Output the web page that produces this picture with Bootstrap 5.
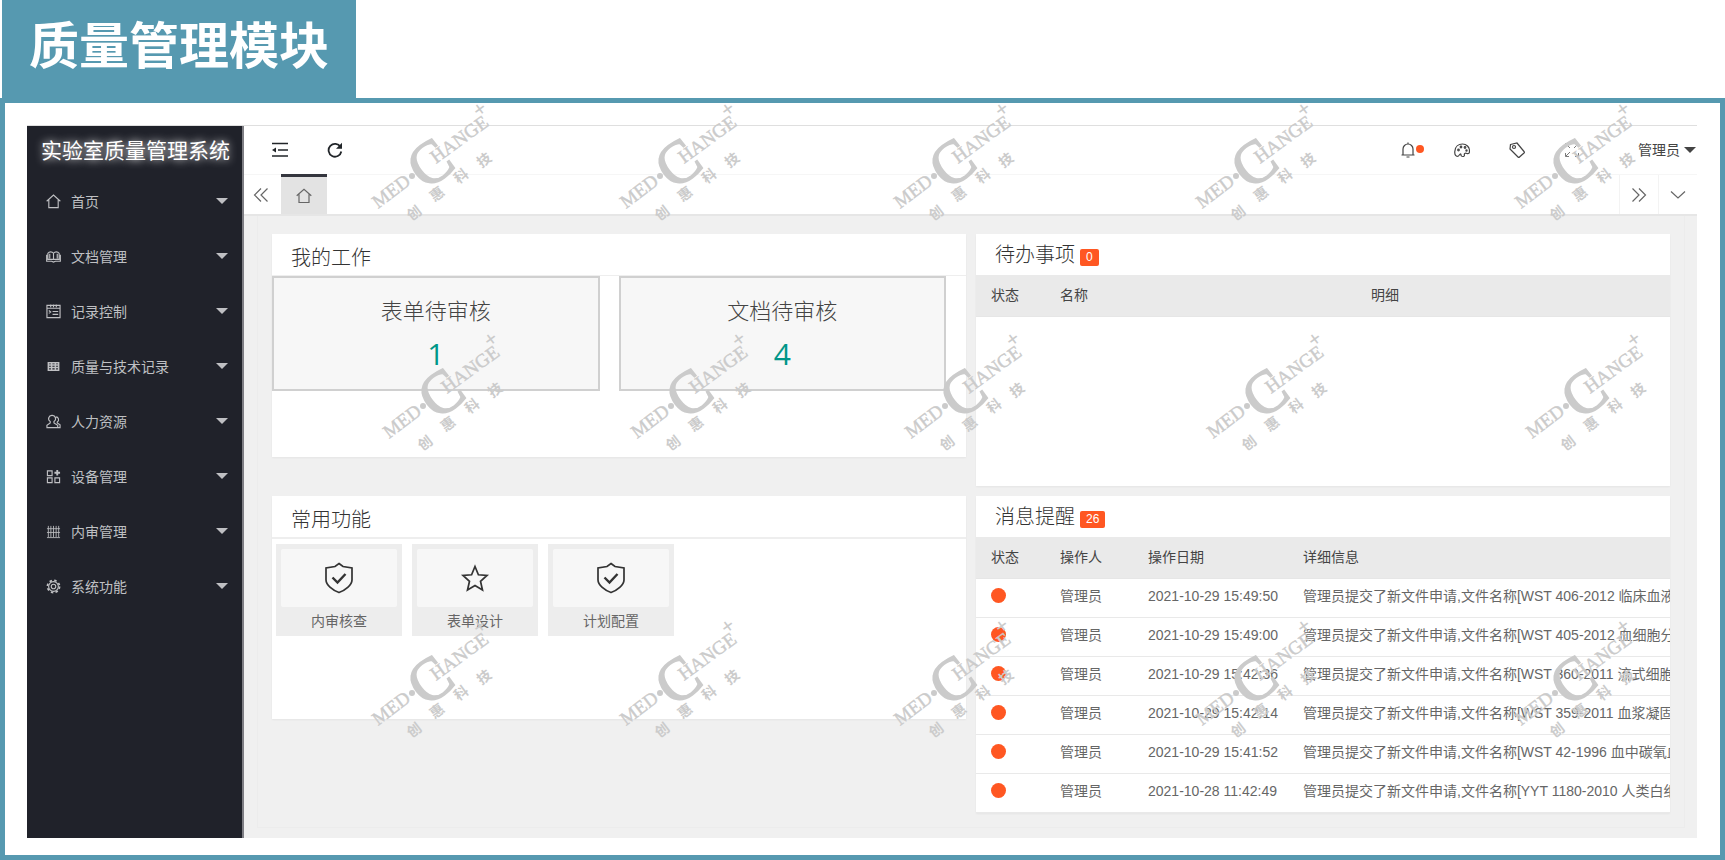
<!DOCTYPE html>
<html lang="zh-CN">
<head>
<meta charset="utf-8">
<meta name="viewport" content="width=device-width, initial-scale=1">
<title>质量管理模块</title>
<link href="https://cdn.jsdelivr.net/npm/bootstrap@5.3.0/dist/css/bootstrap.min.css" rel="stylesheet">
<style>
  :root { --teal: #5699b0; --ink: #20222a; --alert: #ff5722; }
  body { font-family: "Liberation Sans", "Noto Sans CJK SC", sans-serif; font-size: 14px; line-height: 20px; color: #666; background: #fff; }
  a { text-decoration: none; color: inherit; }
  button { color: inherit; }
  .ico { fill: none; stroke: currentColor; stroke-width: 1.2; display: block; width: 16px; height: 16px; }
  .page-title { background: var(--teal); color: #fff; height: 98px; width: 354px; margin-left: 2px; padding: 11px 0 0 27px; font-size: 50px; line-height: 72px; font-weight: 700; }
  .frame { border: 5px solid var(--teal); padding: 22px 23px 17px 22px; }
  .app { border-top: 1px solid #dfdfdf; }
  .side { width: 217px; background: var(--ink); border-right: 2px solid #7e7e84; color: #bfc0c3; }
  .brand { height: 48px; padding: 0 14px; font-size: 21px; line-height: 49px; color: #fff; text-shadow: 0 0 8px #fff; white-space: nowrap; }
  .side-link { height: 55px; padding: 0 14px 0 19px; gap: 10px; }
  .caret { border: 6px solid transparent; border-top-color: currentColor; border-bottom: 0; margin-bottom: 1px; }
  .side-link .ico { width: 15px; height: 15px; }
  .topbar { height: 49px; padding: 0 1px 0 28px; border-bottom: 1px solid #f6f6f6; color: #444; }
  .icon-btn { background: none; border: 0; padding: 0; }
  .tools { gap: 39px; }
  .alerts { gap: 30px; }
  .tool-full { margin-right: 19px; }
  .tabs { height: 41px; border-bottom: 2px solid #e6e6e6; }
  .tab-home { width: 46px; background: #e3e3e3; border-top: 3px solid #34363e; margin-top: -1px; }
  .tab-side { width: 37px; }
  .tab-ctl { width: 39px; border-left: 1px solid #f3f3f3; }
  .content { background: #f0f0f0; padding: 0 12px 10px 13px; }
  .sheet { border: 1px solid #ececec; border-top: 0; padding: 18px 14px 14px; }
  .grow-safe { min-width: 0; }
  .panels { --bs-gutter-x: 10px; --bs-gutter-y: 10px; }
  .panel { background: #fff; box-shadow: 0 1px 2px rgba(0,0,0,.05); overflow: hidden; }
  .panel-title { height: 41px; padding-left: 19px; font-size: 20px; line-height: 49px; font-weight: 300; margin: 0; color: #333; }
  .panel-title.with-count { line-height: 40px; }
  .rule { border-bottom: 1px solid #eee; height: 42px; }
  .rule-wide { border-bottom-width: 2px; height: 43px; }
  .short { height: 223px; }
  .todo { height: 252px; }
  .count { background: var(--alert); color: #fff; font-size: 12px; line-height: 17px; font-weight: 400; padding: 0 6px; border-radius: 2px; margin: 5px 0 0 5px; }
  .work { gap: 19px; padding-right: 20px; }
  .work-box { height: 115px; border: 2px solid #d0d0d0; background: #f7f7f7; padding-top: 17px; color: #444; font-size: 22px; line-height: 33px; font-weight: 300; }
  .work-num { font-family: "Open Sans", sans-serif; font-size: 30px; line-height: 36px; font-weight: 400; color: #009688; margin-top: 8px; }
  .tiles { gap: 10px; padding: 5px 4px; }
  .tile { width: 126px; height: 92px; background: #ededed; padding: 5px; }
  .tile-pic { height: 58px; background: #f7f7f7; border-radius: 2px; color: #333; }
  .tile-pic .ico { width: 32px; height: 32px; stroke-width: 1.7; }
  .tile-name { line-height: 28px; }
  .grid-table { table-layout: fixed; width: 100%; margin: 0; }
  .grid-table th { background: #eaeaea; height: 41px; padding: 0 0 0 15px; font-weight: 400; color: #444; border-bottom: 1px solid #e6e6e6; }
  .grid-table td { height: 39px; padding: 0 0 3px 15px; border-bottom: 1px solid #e9e9e9; white-space: nowrap; overflow: hidden; color: #666; }
  .c-state { width: 69px; } .c-name { width: 311px; } .c-user { width: 88px; } .c-date { width: 155px; }
  .dot { display: block; width: 15px; height: 15px; border-radius: 50%; background: var(--alert); margin-bottom: 2px; }
  .dot-sm { display: block; width: 8px; height: 8px; border-radius: 50%; background: var(--alert); margin-bottom: 3px; }
  .marks { pointer-events: none; fill: #cbcbcb; font-family: "Liberation Serif", "Noto Sans CJK SC", serif; }
</style>
</head>
<body>
<svg class="d-none">
  <symbol id="home" viewBox="0 0 16 16"><path d="M.7 7.700 8 1.200l7.300 6.500M3 6.200V14.500H13V6.200"/></symbol>
  <symbol id="book" viewBox="0 0 16 16"><path d="M8 4.500C6.500 2.500 3.500 2.500 2 4.500V11h6V4.500C9.500 2.500 12.500 2.500 14 4.500V11H8M.7 6v7H6l2 1 2-1h5.300V6M4 5v5M12 5v5"/></symbol>
  <symbol id="form" viewBox="0 0 16 16"><path d="M1 1.500h14v13H1zM1 4.500h14M5 .5v3M8 .5v3M11 .5v3M3 7l2 1.500L3 10M7 8h6M7 11h6"/></symbol>
  <symbol id="grid" viewBox="0 0 16 16"><path d="M2.500 4h11v8h-11zM2.500 6.500h11M2.500 9h11M6 4v8M10 4v8" stroke-width="1.600"/></symbol>
  <symbol id="people" viewBox="0 0 16 16"><path d="M6.500 1.500a3.500 3.500 0 0 1 2 6.500v1.500L12.500 12v2.500H1V12l3.500-2.500V8a3.500 3.500 0 0 1 2-6.500M10.500 3c3 0 4 4 1.500 5.500v1l3 2v3h-2"/></symbol>
  <symbol id="blocks" viewBox="0 0 16 16"><path d="M1.500 2h5v5h-5zM1.500 9.500h5v5h-5zM9.500 9.500h5v5h-5z"/><path d="M12 1v6M9 4h6" stroke-width="2"/></symbol>
  <symbol id="mesh" viewBox="0 0 16 16"><path d="M1 14.500h14M2.500 2v12M5.200 2v12M8 2v12M10.800 2v12M13.500 2v12M1 5h14M1 9h14" stroke-width=".9"/></symbol>
  <symbol id="gear" viewBox="0 0 16 16"><circle cx="8" cy="8" r="5.200"/><circle cx="8" cy="8" r="2.400"/><circle cx="8" cy="8" r="6.500" stroke-width="1.800" stroke-dasharray="2.600 2.505"/></symbol>
  <symbol id="fold" viewBox="0 0 16 16"><path d="M0 1.500h16M6 8h10M0 14h16" stroke-width="1.700"/><path d="M0 8l4-2.500v5z" fill="currentColor" stroke="none"/></symbol>
  <symbol id="reload" viewBox="0 0 16 16"><path d="M13.500 5A6.400 6.400 0 1 0 14.300 9.500" stroke-width="1.800"/><path d="M15 .8v6H9z" fill="currentColor" stroke="none"/></symbol>
  <symbol id="bell" viewBox="0 0 16 16"><path d="M1.500 13h13M3 13V7a5 5 0 0 1 10 0v6M6.500 15h3M8 .5V2"/></symbol>
  <symbol id="palette" viewBox="0 0 16 16"><path d="M4.500 14C2 15 .5 13 .8 9.500 1 4.500 4.500 2 8.500 2S15.500 5 15.500 9c0 2.500-1 3-2.500 2.500-2-.8-3 0-2.600 1.500C10.800 15 7 15 7 13s-1-1-2.500 1z"/><circle cx="4.500" cy="8" r=".8"/><circle cx="7" cy="5" r=".8"/><circle cx="11" cy="5.500" r=".8"/><circle cx="12.500" cy="8.500" r=".6"/></symbol>
  <symbol id="tag" viewBox="0 0 16 16"><path d="M1.500 2.500 8 1l7 8.500c.5.500.5 1 0 1.500l-4.500 4c-.5.500-1 .5-1.500 0L1 7z"/><circle cx="5" cy="5" r="1.500"/></symbol>
  <symbol id="full" viewBox="0 0 16 16"><path d="M1.500 5V1.500H5M11 1.500h3.500V5M14.500 11v3.500H11M5 14.500H1.500V11M2 2l4 4M14 2l-4 4M14 14l-4-4M2 14l4-4" stroke-width="1" opacity=".7"/></symbol>
  <symbol id="left2" viewBox="0 0 16 16"><path d="M8 1.500 1.500 8 8 14.500M14.500 1.500 8 8l6.500 6.500"/></symbol>
  <symbol id="right2" viewBox="0 0 16 16"><path d="M1.500 1.500 8 8l-6.500 6.500M8 1.500 14.500 8 8 14.500"/></symbol>
  <symbol id="down" viewBox="0 0 16 16"><path d="M1 4.500 8 11l7-6.500"/></symbol>
  <symbol id="shield" viewBox="0 0 32 32"><path d="M16 1.500 20 4.500 29 6V18c0 5-7 10.500-13 12.500C10 28.500 3 23 3 18V6l9-1.500z"/><path d="M9.500 15.500l5 5 8-8.500" stroke-width="2.400"/></symbol>
  <symbol id="star" viewBox="0 0 32 32"><path d="m16 4.500 3.400 8.300 8.600.7-6.500 5.800 2 8.700-7.500-4.500L8.500 28l2-8.700L4 13.500l8.600-.7z"/></symbol>
</svg>

<div class="position-relative min-vh-100 d-flex flex-column overflow-hidden">
  <h1 class="page-title mb-0 text-nowrap">质量管理模块</h1>
  <div class="frame flex-grow-1 d-flex">
    <div class="app d-flex flex-grow-1 grow-safe">
      <aside class="side flex-shrink-0">
        <div class="brand">实验室质量管理系统</div>
        <nav class="nav flex-column flex-nowrap">
          <a href="#" class="side-link d-flex align-items-center"><svg class="ico"><use href="#home"/></svg><span class="flex-grow-1">首页</span><i class="caret"></i></a>
          <a href="#" class="side-link d-flex align-items-center"><svg class="ico"><use href="#book"/></svg><span class="flex-grow-1">文档管理</span><i class="caret"></i></a>
          <a href="#" class="side-link d-flex align-items-center"><svg class="ico"><use href="#form"/></svg><span class="flex-grow-1">记录控制</span><i class="caret"></i></a>
          <a href="#" class="side-link d-flex align-items-center"><svg class="ico"><use href="#grid"/></svg><span class="flex-grow-1">质量与技术记录</span><i class="caret"></i></a>
          <a href="#" class="side-link d-flex align-items-center"><svg class="ico"><use href="#people"/></svg><span class="flex-grow-1">人力资源</span><i class="caret"></i></a>
          <a href="#" class="side-link d-flex align-items-center"><svg class="ico"><use href="#blocks"/></svg><span class="flex-grow-1">设备管理</span><i class="caret"></i></a>
          <a href="#" class="side-link d-flex align-items-center"><svg class="ico"><use href="#mesh"/></svg><span class="flex-grow-1">内审管理</span><i class="caret"></i></a>
          <a href="#" class="side-link d-flex align-items-center"><svg class="ico"><use href="#gear"/></svg><span class="flex-grow-1">系统功能</span><i class="caret"></i></a>
        </nav>
      </aside>

      <div class="d-flex flex-column flex-grow-1 grow-safe">
        <header class="topbar d-flex align-items-center justify-content-between">
          <div class="tools d-flex text-dark">
            <button class="icon-btn" aria-label="收起菜单"><svg class="ico"><use href="#fold"/></svg></button>
            <button class="icon-btn" aria-label="刷新"><svg class="ico"><use href="#reload"/></svg></button>
          </div>
          <div class="tools d-flex align-items-center">
            <div class="alerts d-flex align-items-center">
              <button class="icon-btn d-flex align-items-center" aria-label="消息"><svg class="ico"><use href="#bell"/></svg><span class="dot-sm"></span></button>
              <button class="icon-btn" aria-label="主题"><svg class="ico"><use href="#palette"/></svg></button>
            </div>
            <button class="icon-btn" aria-label="标签"><svg class="ico"><use href="#tag"/></svg></button>
            <button class="icon-btn tool-full" aria-label="全屏"><svg class="ico"><use href="#full"/></svg></button>
            <button class="icon-btn d-flex align-items-center gap-1">管理员<i class="caret"></i></button>
          </div>
        </header>
        <div class="tabs d-flex">
          <button class="icon-btn tab-side d-flex align-items-center justify-content-center pe-1" aria-label="向左"><svg class="ico"><use href="#left2"/></svg></button>
          <a href="#" class="tab-home d-flex align-items-center justify-content-center" aria-label="首页"><svg class="ico"><use href="#home"/></svg></a>
          <div class="d-flex ms-auto">
            <button class="icon-btn tab-ctl d-flex align-items-center justify-content-center" aria-label="向右"><svg class="ico"><use href="#right2"/></svg></button>
            <button class="icon-btn tab-ctl d-flex align-items-center justify-content-center" aria-label="更多"><svg class="ico"><use href="#down"/></svg></button>
          </div>
        </div>

        <main class="content flex-grow-1 d-flex">
          <div class="sheet flex-grow-1 grow-safe">
            <div class="row panels align-items-start">
              <div class="col-6"><section class="panel short">
                <h2 class="panel-title rule">我的工作</h2>
                <div class="work d-flex text-center">
                  <a href="#" class="work-box flex-fill w-50">表单待审核<div class="work-num">1</div></a>
                  <a href="#" class="work-box flex-fill w-50">文档待审核<div class="work-num">4</div></a>
                </div>
              </section></div>
              <div class="col-6"><section class="panel todo">
                <h2 class="panel-title with-count d-flex align-items-center">待办事项<span class="count">0</span></h2>
                <table class="grid-table">
                  <thead><tr><th class="c-state">状态</th><th class="c-name">名称</th><th>明细</th></tr></thead>
                </table>
              </section></div>
              <div class="col-6"><section class="panel short">
                <h2 class="panel-title rule rule-wide">常用功能</h2>
                <div class="tiles d-flex text-center">
                  <a href="#" class="tile"><div class="tile-pic d-flex align-items-center justify-content-center"><svg class="ico"><use href="#shield"/></svg></div><div class="tile-name">内审核查</div></a>
                  <a href="#" class="tile"><div class="tile-pic d-flex align-items-center justify-content-center"><svg class="ico"><use href="#star"/></svg></div><div class="tile-name">表单设计</div></a>
                  <a href="#" class="tile"><div class="tile-pic d-flex align-items-center justify-content-center"><svg class="ico"><use href="#shield"/></svg></div><div class="tile-name">计划配置</div></a>
                </div>
              </section></div>
              <div class="col-6"><section class="panel">
                <h2 class="panel-title with-count d-flex align-items-center">消息提醒<span class="count">26</span></h2>
                <table class="grid-table">
                  <thead><tr><th class="c-state">状态</th><th class="c-user">操作人</th><th class="c-date">操作日期</th><th>详细信息</th></tr></thead>
                  <tbody>
                    <tr><td><span class="dot"></span></td><td>管理员</td><td>2021-10-29 15:49:50</td><td>管理员提交了新文件申请,文件名称[WST 406-2012 临床血液</td></tr>
                    <tr><td><span class="dot"></span></td><td>管理员</td><td>2021-10-29 15:49:00</td><td>管理员提交了新文件申请,文件名称[WST 405-2012 血细胞分</td></tr>
                    <tr><td><span class="dot"></span></td><td>管理员</td><td>2021-10-29 15:42:36</td><td>管理员提交了新文件申请,文件名称[WST 360-2011 流式细胞</td></tr>
                    <tr><td><span class="dot"></span></td><td>管理员</td><td>2021-10-29 15:42:14</td><td>管理员提交了新文件申请,文件名称[WST 359-2011 血浆凝固</td></tr>
                    <tr><td><span class="dot"></span></td><td>管理员</td><td>2021-10-29 15:41:52</td><td>管理员提交了新文件申请,文件名称[WST 42-1996 血中碳氧血</td></tr>
                    <tr><td><span class="dot"></span></td><td>管理员</td><td>2021-10-28 11:42:49</td><td>管理员提交了新文件申请,文件名称[YYT 1180-2010 人类白细</td></tr>
                  </tbody>
                </table>
              </section></div>
            </div>
          </div>
        </main>
      </div>
    </div>
  </div>
  <svg class="marks position-absolute top-0 start-0 w-100 h-100" id="marks"></svg>
</div>
<script src="https://cdn.jsdelivr.net/npm/bootstrap@5.3.0/dist/js/bootstrap.bundle.min.js"></script>
<script>
  // Company watermark, repeated in three rows over the page
  const mark = `
    <g font-size="19" stroke="#cbcbcb" stroke-width=".4">
      <text transform="translate(18 114) rotate(-37)">MED</text>
      <text transform="translate(76 69) rotate(-36)">HANGE</text>
    </g>
    <circle cx="52" cy="81" r="3"/>
    <text font-size="60" stroke="#cbcbcb" stroke-width="1.500" transform="translate(66 96) rotate(-37)">C</text>
    <text font-size="22" font-weight="700" text-anchor="middle" transform="translate(124 20) rotate(-37)">+</text>
    <g font-size="14" font-weight="700" text-anchor="middle">
      <text transform="translate(57 122) rotate(-37)">创</text>
      <text transform="translate(80 103) rotate(-37)">惠</text>
      <text transform="translate(104 85) rotate(-37)">科</text>
      <text transform="translate(127 69) rotate(-37)">技</text>
    </g>`;
  const columns = [360, 608, 882, 1184, 1503];
  const rows = [[0, 95], [11, 325], [0, 612]];
  document.getElementById('marks').innerHTML = rows.map(([dx, y]) =>
    columns.map(x => `<g transform="translate(${x + dx} ${y})">${mark}</g>`).join('')).join('');
</script>
</body>
</html>
